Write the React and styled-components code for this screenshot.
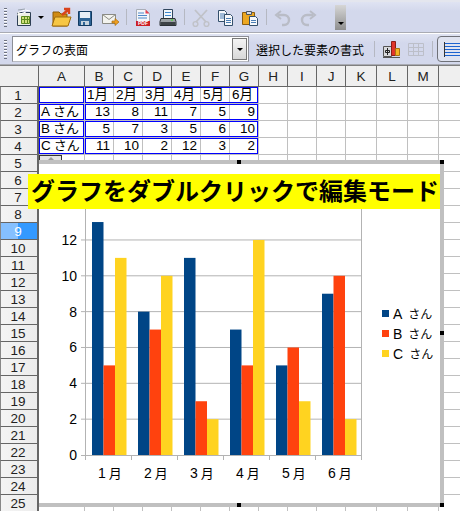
import React from 'react'
import styled, { createGlobalStyle } from 'styled-components'

const FONT = '"Liberation Sans", "Noto Sans CJK JP", sans-serif'

const GlobalStyle = createGlobalStyle`
  html, body {
    margin: 0;
    padding: 0;
    background: #fff;
    overflow: hidden;
  }
`

// data
const COLUMNS = ['A', 'B', 'C', 'D', 'E', 'F', 'G', 'H', 'I', 'J', 'K', 'L', 'M', '']
const SERIES = [
  { name: 'A', color: '#004586', values: [13, 8, 11, 7, 5, 9] },
  { name: 'B', color: '#ff420e', values: [5, 7, 3, 5, 6, 10] },
  { name: 'C', color: '#ffd320', values: [11, 10, 2, 12, 3, 2] },
]
const MONTHS = ['1月', '2月', '3月', '4月', '5月', '6月']

const Page = styled.div`
  position: relative;
  width: 460px;
  height: 511px;
  overflow: hidden;
  font-family: ${FONT};
  background: #fff;
`

// toolbars
const Toolbar = styled.div`
  display: flex;
  align-items: center;
  box-sizing: border-box;
  height: ${(p) => p.$height}px;
  padding-left: 4px;
  background: linear-gradient(#dfe3f2, #d3d8ec 30%, #d3d8ec);
  border-top: ${(p) => p.$top}px solid ${(p) => p.$topColor};
  border-bottom: 1px solid #a9abb3;
`
const Grip = styled.div`
  width: 3px;
  height: 19px;
  margin-right: 5px;
  flex: none;
  background: repeating-linear-gradient(#6d7280 0 1px, #fff 1px 2px, transparent 2px 3px);
`
const Tool = styled.svg`
  width: 24px;
  height: 24px;
  flex: none;
  margin-left: ${(p) => p.$gap || 0}px;
`
const MenuArrow = styled.div`
  width: 0;
  height: 0;
  margin: 0 2px;
  flex: none;
  border-left: 3px solid transparent;
  border-right: 3px solid transparent;
  border-top: 3px solid #000;
`
const Separator = styled.div`
  width: 1px;
  height: 16px;
  margin: 0 4px;
  flex: none;
  background: #b5b8c2;
`
const Overflow = styled.div`
  display: flex;
  align-items: flex-end;
  justify-content: center;
  box-sizing: border-box;
  width: 11px;
  height: 25px;
  margin-left: 15px;
  padding-bottom: 5px;
  flex: none;
  background: linear-gradient(#d6d6d6, #8f8f8f);
`
const OverflowArrow = styled(MenuArrow)`
  margin: 0;
`
const Combo = styled.div`
  display: flex;
  align-items: center;
  box-sizing: border-box;
  width: 237px;
  height: 26px;
  flex: none;
  background: #fff;
  border: 1px solid #8c8e96;
  border-bottom-color: #b8bac2;
`
const ComboText = styled.span`
  flex: 1;
  padding-left: 3px;
  font-size: 12px;
  color: #000;
`
const ComboButton = styled.div`
  display: flex;
  align-items: center;
  justify-content: center;
  box-sizing: border-box;
  width: 15px;
  height: 22px;
  margin-right: 1px;
  background: linear-gradient(#f4f4f4, #d8d8d8);
  border: 1px solid #777;
`
const ToolLabel = styled.span`
  margin-left: 7px;
  width: 114px;
  flex: none;
  font-size: 12px;
  color: #000;
  white-space: nowrap;
`
const ActiveTool = styled.div`
  display: flex;
  align-items: center;
  justify-content: center;
  box-sizing: border-box;
  width: 30px;
  height: 26px;
  flex: none;
  background: #dfe3f0;
  border: 1px solid #6f7178;
  border-radius: 4px;
`

// sheet
const Sheet = styled.div`
  display: grid;
  grid-template-columns: 39px 46px repeat(9, 29px) 31px 31px 31px 22px;
  grid-template-rows: 22px;
  grid-auto-rows: 17px;
  font-size: 13.5px;
  color: #000;
`
const ColHead = styled.div`
  display: flex;
  align-items: center;
  justify-content: center;
  box-sizing: border-box;
  padding-top: 1px;
  color: #222;
  background: #efefef;
  border-top: 1px solid #808080;
  border-right: 1px solid #666;
  border-bottom: 1px solid #666;
`
const RowHead = styled.div`
  display: flex;
  align-items: center;
  justify-content: center;
  box-sizing: border-box;
  padding-right: 2px;
  color: ${(p) => (p.$active ? '#fff' : '#222')};
  background: ${(p) =>
    p.$active
      ? 'linear-gradient(90deg, #85c0ff 0 48%, #3399ff 48%)'
      : 'linear-gradient(90deg, #f4f4f4, #ececec)'};
  border-left: 1px solid #888;
  border-right: 2px solid #666;
  border-bottom: 1px solid #666;
`
const Cell = styled.div`
  grid-row: ${(p) => p.$row};
  grid-column: ${(p) => p.$col};
  box-sizing: border-box;
  padding: 0 3px 0 2px;
  line-height: 16px;
  white-space: nowrap;
  overflow: hidden;
  text-align: ${(p) => (p.$right ? 'right' : 'left')};
  border-right: 1px solid #c0c0c0;
  border-bottom: 1px solid #c0c0c0;
`
const Range = styled.div`
  box-sizing: border-box;
  grid-row: ${(p) => p.$row};
  grid-column: ${(p) => p.$from} / ${(p) => p.$to};
  margin: 0 1px 1px 0;
  border: 1px solid #0000ff;
`
const Kana = styled.span`
  margin-left: ${(p) => p.$gap}px;
  font-size: ${(p) => p.$size}px;
`

// chart object
const Frame = styled.div`
  position: absolute;
  top: 160px;
  left: 39px;
  display: flex;
  align-items: center;
  box-sizing: border-box;
  width: 405px;
  height: 347px;
  background: #fff;
  border-top: 4px solid #c0c0c0;
  border-right: 4px solid #c0c0c0;
  border-bottom: 4px solid #c0c0c0;
`
const AnchorTab = styled.div`
  position: absolute;
  top: 155px;
  left: 39px;
  display: flex;
  justify-content: center;
  box-sizing: border-box;
  width: 23px;
  height: 5px;
  padding-top: 1px;
  background: #e4e4e4;
  border: 1px solid #333;
  border-bottom: none;
`
const AnchorArrow = styled.div`
  width: 0;
  height: 0;
  border-left: 3px solid transparent;
  border-right: 3px solid transparent;
  border-bottom: 3px solid #999;
`
const Handle = styled.div`
  position: absolute;
  left: ${(p) => p.$x}px;
  top: ${(p) => p.$y}px;
  width: 4px;
  height: 4px;
  background: #000;
`
const Title = styled.div`
  position: absolute;
  top: 174px;
  left: 28px;
  box-sizing: border-box;
  width: 412px;
  height: 35px;
  padding-left: 3px;
  font-size: 24px;
  font-weight: 700;
  line-height: 35px;
  white-space: nowrap;
  color: #000;
  background: #ffff00;
`
const Plot = styled.svg`
  width: 335px;
  height: 339px;
  flex: none;
  font-family: ${FONT};
`
const Legend = styled.div`
  display: flex;
  flex-direction: column;
  margin-left: 8px;
`
const LegendItem = styled.div`
  display: flex;
  align-items: center;
  height: 20px;
  font-size: 14px;
  white-space: nowrap;
  color: #000;
`
const Swatch = styled.span`
  width: 7px;
  height: 7px;
  margin-right: 4px;
  background: ${(p) => p.$color};
`

const NewIcon = () => (
  <Tool viewBox="0 0 24 24">
    <path d="M5.500 7.500h13v13h-13z" fill="#eef0e4" stroke="#2e3f55" />
    <path d="M9.500 11.500h8v7h-8z" fill="#cfe07a" stroke="#5d8a1e" />
    <path d="M12.500 11.500v7M15.500 11.500v7M9.500 14.500h8" stroke="#5d8a1e" />
    <path d="M5 8l8-3 5 1M5 10l9-3" stroke="#fff" fill="none" />
    <path d="M6 5l7-1" stroke="#9aa3ad" />
  </Tool>
)
const FolderIcon = () => (
  <Tool viewBox="0 0 24 24" $gap={3}>
    <path d="M4 7h6l2 2h6v12H4z" fill="#d08a12" stroke="#8a5a08" />
    <path d="M3 21l3-9h16l-3 9z" fill="#f6c644" stroke="#a06c0c" />
    <path d="M13 10l6-5M15 4h5v5" stroke="#d9431c" strokeWidth="2.400" fill="none" />
  </Tool>
)
const SaveIcon = () => (
  <Tool viewBox="0 0 24 24">
    <path d="M5.500 6.500h13v14h-13z" fill="#2f6496" stroke="#123a60" />
    <path d="M7 7h10v6H7z" fill="#e8eef6" />
    <path d="M8 16h8v4H8z" fill="#c7d3de" />
    <path d="M10 17h2v3h-2z" fill="#2f6496" />
  </Tool>
)
const MailIcon = () => (
  <Tool viewBox="0 0 24 24" $gap={1}>
    <path d="M4.500 9.500h13v9h-13z" fill="#f3f3ee" stroke="#8b8b84" />
    <path d="M4.500 9.500l6.500 5 6.500-5" fill="none" stroke="#8b8b84" />
    <path d="M14 16h3v-2.500l4 3.500-4 3.500V18h-3z" fill="#f0a020" stroke="#a86c10" strokeWidth=".700" />
  </Tool>
)
const PdfIcon = () => (
  <Tool viewBox="0 0 24 24">
    <path d="M5.500 4.500h9l4 4v9h-13z" fill="#f4f6fa" stroke="#a8aeb8" />
    <path d="M14.500 4.500l4 4h-4z" fill="#e84050" />
    <path d="M7 8h6M7 10.500h9M7 13h9" stroke="#4f88c8" />
    <path d="M5 16h14v5H5z" fill="#cc1f26" />
    <text x="12" y="20.400" fontSize="5" fontWeight="700" fill="#fff" textAnchor="middle" fontFamily="Liberation Sans">PDF</text>
  </Tool>
)
const PrintIcon = () => (
  <Tool viewBox="0 0 24 24" $gap={1}>
    <path d="M7.500 4.500h9v9h-9z" fill="#f2f6fb" stroke="#31465e" />
    <path d="M9 7.500h6M9 10.500h6" stroke="#3d87d0" />
    <path d="M5 13.500h14l1 3v4H4v-4z" fill="#9aa0a4" stroke="#2c3236" />
    <path d="M4.500 17h15v3h-15z" fill="#3d4347" />
    <path d="M15 15h2" stroke="#58d04a" strokeWidth="1.500" />
  </Tool>
)
const CutIcon = () => (
  <Tool viewBox="0 0 24 24" stroke="#c0c2c8" fill="none">
    <path d="M6 5l11 12M18 5L7 17" strokeWidth="1.800" />
    <circle cx="6.500" cy="19" r="2.400" strokeWidth="1.400" />
    <circle cx="17.500" cy="19" r="2.400" strokeWidth="1.400" />
  </Tool>
)
const CopyIcon = () => (
  <Tool viewBox="0 0 24 24">
    <path d="M5.500 5.500h6l2 2v9h-8z" fill="#f6f8fb" stroke="#34506c" />
    <path d="M7 9h5M7 11h5M7 13h5" stroke="#4b7fb5" />
    <path d="M11.500 9.500h6l2 2v9h-8z" fill="#f6f8fb" stroke="#34506c" />
    <path d="M13 13.500h5M13 15.500h5M13 17.500h5" stroke="#4b7fb5" />
  </Tool>
)
const PasteIcon = () => (
  <Tool viewBox="0 0 24 24" $gap={1}>
    <path d="M4.500 7.500h12v12h-12z" fill="#eda822" stroke="#8a5c10" />
    <path d="M8.500 6.500h5v3h-5z" fill="#d8dce2" stroke="#4b5563" />
    <path d="M11.500 11.500h6l2 2v7h-8z" fill="#f6f8fb" stroke="#34506c" />
    <path d="M13 15.500h5M13 17.500h5" stroke="#4b7fb5" />
  </Tool>
)
const UndoIcon = () => (
  <Tool viewBox="0 0 24 24" fill="none" stroke="#b9bcc6" strokeWidth="2.400">
    <path d="M7 10h6a5 5 0 0 1 0 10h-2" />
    <path d="M10 6l-5 4 5 4" strokeWidth="2" />
  </Tool>
)
const RedoIcon = () => (
  <Tool viewBox="0 0 24 24" fill="none" stroke="#b9bcc6" strokeWidth="2.400" $gap={1}>
    <path d="M17 10h-6a5 5 0 0 0 0 10h2" />
    <path d="M14 6l5 4-5 4" strokeWidth="2" />
  </Tool>
)
const ChartIcon = () => (
  <Tool viewBox="0 0 24 24">
    <path d="M4.500 9.500h8v10h-8z" fill="#d9dadd" stroke="#555" />
    <path d="M8.500 11v7M6.500 13.500h4v2h-4z" fill="none" stroke="#222" />
    <path d="M12.500 4.500h4v14h-4z" fill="#e0352a" stroke="#8c1f18" />
    <path d="M16.500 11.500h4v7h-4z" fill="#f5b324" stroke="#a87410" />
    <path d="M4 20.500h17" stroke="#555" />
  </Tool>
)
const TableIcon = () => (
  <Tool viewBox="0 0 24 24" $gap={1} fill="none" stroke="#bcbfc9">
    <path d="M4.500 6.500h15v12h-15zM4.500 10.500h15M4.500 14.500h15M9.500 6.500v12M14.500 6.500v12" />
  </Tool>
)
const ListIcon = () => (
  <Tool viewBox="0 0 24 24" fill="none" stroke="#1c63d0">
    <path d="M5 6.500h15M5 9.500h15M5 12.500h15M5 15.500h15M5 18.500h15" />
    <path d="M4.500 5v15" stroke="#333" />
  </Tool>
)

// chart coordinates are inside the frame
const AXIS_LEFT = 46
const AXIS_BOTTOM = 291
const UNIT = 17.92
const GROUP = 46
const BAR = 11.5

const BarChart = () => (
  <Plot viewBox="0 0 335 339">
    {[2, 4, 6, 8, 10, 12, 14].map((v) => (
      <line
        key={v}
        x1={AXIS_LEFT - 4}
        x2={AXIS_LEFT + GROUP * 6}
        y1={AXIS_BOTTOM - v * UNIT}
        y2={AXIS_BOTTOM - v * UNIT}
        stroke="#b3b3b3"
      />
    ))}
    <path
      d={`M${AXIS_LEFT + 0.5} 40V${AXIS_BOTTOM + 5}M${AXIS_LEFT + GROUP * 6 + 0.5} 40V${AXIS_BOTTOM + 5}M${AXIS_LEFT - 4} ${AXIS_BOTTOM + 0.5}H${AXIS_LEFT + GROUP * 6}`}
      stroke="#b3b3b3"
      fill="none"
    />
    {MONTHS.map((_, i) => (
      <line
        key={i}
        x1={AXIS_LEFT + GROUP * i + 0.5}
        x2={AXIS_LEFT + GROUP * i + 0.5}
        y1={AXIS_BOTTOM}
        y2={AXIS_BOTTOM + 5}
        stroke="#b3b3b3"
      />
    ))}
    {SERIES.map((s, si) =>
      s.values.map((v, i) => (
        <rect
          key={`${si}-${i}`}
          x={AXIS_LEFT + GROUP * i + 7 + BAR * si}
          y={AXIS_BOTTOM - v * UNIT}
          width={BAR}
          height={v * UNIT}
          fill={s.color}
        />
      ))
    )}
    {[0, 2, 4, 6, 8, 10, 12].map((v) => (
      <text key={v} x={AXIS_LEFT - 8} y={AXIS_BOTTOM - v * UNIT + 5} fontSize="14" textAnchor="end">
        {v}
      </text>
    ))}
    {MONTHS.map((m, i) => (
      <text key={m} x={AXIS_LEFT + GROUP * i + 13} y={AXIS_BOTTOM + 23} fontSize="14">
        {m[0]}
        <tspan dx="3" fontSize="13">
          {m[1]}
        </tspan>
      </text>
    ))}
  </Plot>
)

const sheetRows = () => {
  const rows = []
  for (let r = 1; r <= 25; r++) {
    rows.push(
      <RowHead key={`h${r}`} $active={r === 9}>
        {r}
      </RowHead>
    )
    COLUMNS.forEach((_, c) => {
      let text = ''
      let right = false
      if (r === 1 && c >= 1 && c <= 6) text = MONTHS[c - 1]
      if (r >= 2 && r <= 4) {
        if (c === 0) {
          text = (
            <>
              {SERIES[r - 2].name}
              <Kana $gap={3} $size={13}>
                さん
              </Kana>
            </>
          )
        }
        if (c >= 1 && c <= 6) {
          text = SERIES[r - 2].values[c - 1]
          right = true
        }
      }
      rows.push(
        <Cell key={`${r}-${c}`} $row={r + 1} $col={c + 2} $right={right}>
          {text}
        </Cell>
      )
    })
  }
  return rows
}

const App = () => {
  return (
    <Page>
      <GlobalStyle />
      <Toolbar $height={33} $top={2} $topColor="#e4e6ee">
        <Grip />
        <NewIcon />
        <MenuArrow />
        <FolderIcon />
        <SaveIcon />
        <MailIcon />
        <Separator />
        <PdfIcon />
        <PrintIcon />
        <Separator />
        <CutIcon />
        <CopyIcon />
        <PasteIcon />
        <Separator />
        <UndoIcon />
        <RedoIcon />
        <Overflow>
          <OverflowArrow />
        </Overflow>
      </Toolbar>
      <Toolbar $height={32} $top={1} $topColor="#fff">
        <Grip />
        <Combo>
          <ComboText>グラフの表面</ComboText>
          <ComboButton>
            <MenuArrow />
          </ComboButton>
        </Combo>
        <ToolLabel>選択した要素の書式</ToolLabel>
        <Separator />
        <ChartIcon />
        <TableIcon />
        <Separator />
        <ActiveTool>
          <ListIcon />
        </ActiveTool>
      </Toolbar>
      <Sheet>
        <ColHead />
        {COLUMNS.map((c, i) => (
          <ColHead key={i}>{c}</ColHead>
        ))}
        {sheetRows()}
        {[2, 3, 4, 5].map((row) => (
          <React.Fragment key={row}>
            <Range $row={row} $from={2} $to={3} />
            <Range $row={row} $from={3} $to={9} />
          </React.Fragment>
        ))}
      </Sheet>
      <AnchorTab>
        <AnchorArrow />
      </AnchorTab>
      <Frame>
        <BarChart />
        <Legend>
          {SERIES.map((s) => (
            <LegendItem key={s.name}>
              <Swatch $color={s.color} />
              {s.name}
              <Kana $gap={6} $size={12}>
                さん
              </Kana>
            </LegendItem>
          ))}
        </Legend>
      </Frame>
      <Title>グラフをダブルクリックで編集モード</Title>
      <Handle $x={237} $y={160} />
      <Handle $x={440} $y={160} />
      <Handle $x={440} $y={331} />
      <Handle $x={237} $y={503} />
      <Handle $x={440} $y={503} />
    </Page>
  )
}

export default App
